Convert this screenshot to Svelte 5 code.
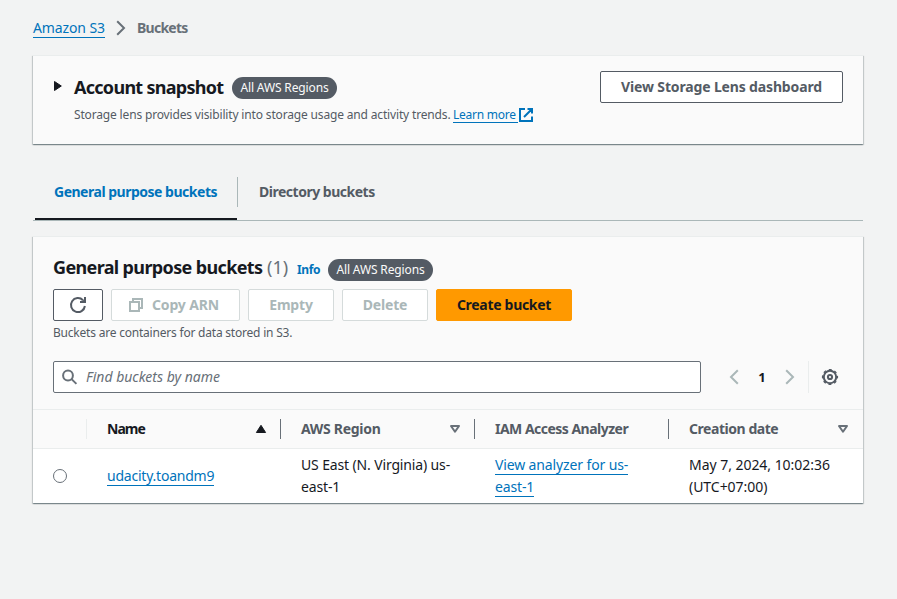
<script>
  const columns = [
    { label: 'Name', sort: 'asc' },
    { label: 'AWS Region', sort: 'none' },
    { label: 'IAM Access Analyzer', sort: null },
    { label: 'Creation date', sort: 'none' }
  ];
</script>

<div class="page">
  <nav class="crumbs">
    <a class="link t-crumb" href="#s3">Amazon S3</a>
    <svg class="chev" width="10" height="16" viewBox="0 0 10 16"><path d="M1.2 1.2L8 8L1.2 14.8" fill="none" stroke="#687078" stroke-width="2" /></svg>
    <span class="here">Buckets</span>
  </nav>

  <section class="panel snapshot">
    <svg class="caret" width="9" height="12" viewBox="0 0 9 12"><path d="M1.5 1.5L8.3 6L1.5 10.5Z" fill="#16191f" stroke="#16191f" stroke-linejoin="round" /></svg>
    <div class="snap-body">
      <div class="snap-title">
        <h2 class="t-snap">Account snapshot</h2>
        <span class="badge"><span>All AWS Regions</span></span>
      </div>
      <p class="desc"><span class="t-desc">Storage lens provides visibility into storage usage and activity trends.</span><a class="link learn" href="#learn"><span>Learn more</span></a><svg class="ext" width="15" height="15" viewBox="0 0 15 15"><path d="M6 2H1V14H13V9.5M8.5 2H13V6.5M13 2L5 10" fill="none" stroke="#0073bb" stroke-width="2" /></svg></p>
    </div>
    <button class="btn lens"><span>View Storage Lens dashboard</span></button>
  </section>

  <div class="tabs">
    <div class="tab active"><span>General purpose buckets</span></div>
    <div class="tab"><span>Directory buckets</span></div>
  </div>

  <section class="panel list">
    <header class="list-head">
      <div class="title-row">
        <h2 class="t-gp">General purpose buckets</h2>
        <span class="count">(1)</span>
        <a class="info" href="#info">Info</a>
        <span class="badge"><span>All AWS Regions</span></span>
      </div>
      <div class="actions">
        <button class="btn refresh" aria-label="Refresh">
          <svg width="18" height="18" viewBox="0 0 18 18"><path d="M15.9 10A7 7 0 1 1 14 4.2" fill="none" stroke="#545b64" stroke-width="2" /><path d="M17 1V7H11V5H13.4L15 3.4V1Z" fill="#545b64" /></svg>
        </button>
        <button class="btn off copy" disabled>
          <svg width="14" height="14" viewBox="0 0 14 14"><path d="M1 4H10V13H1ZM4 4V1H13V10H10" fill="none" stroke="#aab7b8" stroke-width="2" /></svg>
          <span class="t-copy">Copy ARN</span>
        </button>
        <button class="btn off small" disabled><span class="t-empty">Empty</span></button>
        <button class="btn off small" disabled><span class="t-delete">Delete</span></button>
        <button class="btn primary"><span class="t-create">Create bucket</span></button>
      </div>
      <p class="note"><span>Buckets are containers for data stored in S3.</span></p>
    </header>

    <div class="tools">
      <div class="search">
        <svg width="16" height="16" viewBox="0 0 16 16"><circle cx="6" cy="6.5" r="4.9" fill="none" stroke="#687078" stroke-width="2" /><path d="M9.6 10.1L14.4 14.9" stroke="#687078" stroke-width="2" /></svg>
        <span class="t-find">Find buckets by name</span>
      </div>
      <div class="pager">
        <svg width="10" height="16" viewBox="0 0 10 16"><path d="M8.8 1.2L2 8L8.8 14.8" fill="none" stroke="#aab7b8" stroke-width="2" /></svg>
        <b>1</b>
        <svg width="10" height="16" viewBox="0 0 10 16"><path d="M1.2 1.2L8 8L1.2 14.8" fill="none" stroke="#aab7b8" stroke-width="2" /></svg>
      </div>
      <div class="prefs">
        <svg width="18" height="18" viewBox="-9 -9 18 18" fill="none" stroke="#545b64"><circle r="6.2" stroke-width="2" /><circle r="7.4" stroke-width="1.4" stroke-dasharray="2.9 2.912" stroke-dashoffset="1.45" /><circle r="2.1" stroke-width="2" /></svg>
      </div>
    </div>

    <div class="row head">
      <div class="cell pick"></div>
      {#each columns as col, i}
        <div class="cell">
          <span class={['label', `h${i}`, col.sort === 'asc' && 'sorted']}>{col.label}</span>
          {#if col.sort === 'asc'}
            <svg width="12" height="10" viewBox="0 0 12 10"><path d="M6 1.3L10.6 8.5H1.4Z" fill="#16191f" stroke="#16191f" stroke-linejoin="round" /></svg>
          {:else if col.sort}
            <svg width="12" height="10" viewBox="0 0 12 10"><path d="M2 2H10L6 7.8Z" fill="none" stroke="#687078" stroke-width="2" stroke-linejoin="round" /></svg>
          {/if}
        </div>
      {/each}
    </div>
    <div class="row body">
      <div class="cell pick"><span class="radio"></span></div>
      <div class="cell"><a class="link t-name" href="#bucket">udacity.toandm9</a></div>
      <div class="cell"><span class="t-region">US East (N. Virginia) us-<br />east-1</span></div>
      <div class="cell"><span><a class="link t-view" href="#analyzer">View analyzer for us-<br />east-1</a></span></div>
      <div class="cell"><span class="t-date">May 7, 2024, 10:02:36<br />(UTC+07:00)</span></div>
    </div>
  </section>
</div>

<style>
  :global(body) { background: #f2f3f3; }
  * { box-sizing: border-box; }
  .page {
    width: 897px; height: 599px; padding: 17px 34px 0 33px; overflow: hidden;
    background: #f2f3f3; color: #16191f;
    font: 14px/22px "Noto Sans", "Open Sans", sans-serif; white-space: nowrap;
  }
  h2, p { margin: 0; }
  h2 { font-size: 18px; line-height: 22px; font-weight: 700; }
  .link { color: #0073bb; text-decoration: none; border-bottom: 1px solid #0073bb; }
  .crumbs { display: flex; align-items: center; height: 22px; }
  .crumbs .link { width: 72px; height: 20px; line-height: 20px; letter-spacing: -.12px; }
  .chev { margin: 0 11px; }
  .here { color: #687078; font-weight: 700; letter-spacing: -.75px; }
  .panel {
    background: #fafafa; border-top: 1px solid #eaeded;
    box-shadow: 0 1px 1px 0 rgba(0,28,36,.3), 1px 1px 1px 0 rgba(0,28,36,.15), -1px 1px 1px 0 rgba(0,28,36,.15);
  }
  .snapshot { display: flex; align-items: flex-start; height: 89px; margin-top: 16px; padding: 15px 20px 0; }
  .caret { margin: 9px 12px 0 0; }
  .snap-body { flex: 1; }
  .snap-title { display: flex; align-items: center; height: 32px; }
  .snap-title h2 { width: 158px; margin-top: -1px; letter-spacing: -.72px; }
  .snap-title .badge { margin-top: 1px; }
  .badge {
    display: flex; justify-content: center; align-items: center; width: 105px; height: 22px;
    border-radius: 11px; background: #545b64; color: #fafafa; font-size: 12px; letter-spacing: -.14px;
  }
  .desc { display: flex; height: 22px; margin-top: 1px; font-size: 12px; color: #545b64; }
  .t-desc { width: 379px; letter-spacing: -.16px; }
  .learn { width: 65px; height: 19px; letter-spacing: -.25px; }
  .ext { margin: 3px 0 0 1px; }
  .btn {
    display: flex; align-items: center; justify-content: center; height: 32px; padding: 0;
    border: 1px solid #545b64; border-radius: 2px; background: #fff; color: #545b64;
    font: 700 14px/20px "Noto Sans", "Open Sans", sans-serif; white-space: nowrap;
  }
  .lens { width: 243px; letter-spacing: -.15px; }
  .tabs { display: flex; height: 57px; margin-top: 20px; border-bottom: 1px solid #aab7b8; letter-spacing: -.49px; }
  .tab { display: flex; align-items: center; height: 56px; padding: 0 22px; color: #545b64; font-weight: 700; }
  .tab.active { width: 202px; margin-left: 2px; padding: 2px 0 0 19px; border-bottom: 2px solid #16191f; color: #0073bb; position: relative; }
  .tab.active::after { content: ""; position: absolute; right: -1px; top: 13px; width: 1px; height: 30px; background: #aab7b8; }
  .list { height: 267px; margin-top: 15px; }
  .list-head { padding: 19px 20px 0; height: 112px; }
  .title-row { display: flex; align-items: center; height: 25px; }
  .t-gp { width: 214px; margin-top: -3px; letter-spacing: -.64px; }
  .count { width: 30px; margin-top: -3px; font-size: 18px; color: #687078; }
  .info { width: 31px; margin-top: 3px; font-size: 12px; font-weight: 700; letter-spacing: -.4px; color: #0073bb; text-decoration: none; }
  .title-row .badge { margin-top: 2px; }
  .actions { display: flex; gap: 8px; margin-top: 8px; }
  .refresh { width: 50px; }
  .copy { width: 129px; gap: 9px; padding-right: 3px; letter-spacing: -.15px; }
  .small { width: 86px; letter-spacing: -.2px; }
  .off { border-color: #d5dbdb; color: #aab7b8; }
  .primary { width: 136px; border-color: #ff9900; background: #ff9900; color: #16191f; letter-spacing: -.3px; }
  .note { font-size: 12px; line-height: 22px; margin-top: 1px; color: #545b64; letter-spacing: -.21px; }
  .tools { display: flex; align-items: flex-start; height: 60px; padding: 12px 20px 0; }
  .search {
    display: flex; align-items: center; gap: 8px; width: 648px; height: 32px; padding-left: 8px;
    background: #fff; border: 1px solid #687078; border-radius: 2px; color: #687078; font-style: italic;
  }
  .pager { display: flex; align-items: center; justify-content: space-between; width: 66px; height: 32px; margin-left: 28px; font-size: 13px; }
  .prefs { display: flex; align-items: center; justify-content: flex-end; width: 31px; height: 32px; margin-left: 13px; border-left: 1px solid #eaeded; }
  .row { display: grid; grid-template-columns: 54px repeat(4, 194px); }
  .cell { display: flex; align-items: center; padding: 0 0 0 20px; }
  .head { height: 40px; border-top: 1px solid #eaeded; border-bottom: 1px solid #eaeded; align-items: center; color: #545b64; font-weight: 700; }
  .head .cell { height: 20px; justify-content: space-between; padding-right: 13px; border-right: 1px solid #687078; }
  .head .pick { border-color: #eaeded; }
  .head .cell:last-child { border: 0; padding-right: 14px; }
  .h0 { letter-spacing: -.95px; }
  .h1 { letter-spacing: -.3px; }
  .h2 { letter-spacing: -.52px; }
  .h3 { letter-spacing: -.45px; }
  .label.sorted { color: #16191f; }
  .body { height: 54px; background: #fff; }
  .t-name { height: 20px; line-height: 20px; letter-spacing: -.22px; }
  .t-region { letter-spacing: -.14px; }
  .t-view { letter-spacing: -.13px; }
  .t-date { letter-spacing: -.04px; }
  .radio { width: 14px; height: 14px; border: 1px solid #687078; border-radius: 50%; }
</style>
